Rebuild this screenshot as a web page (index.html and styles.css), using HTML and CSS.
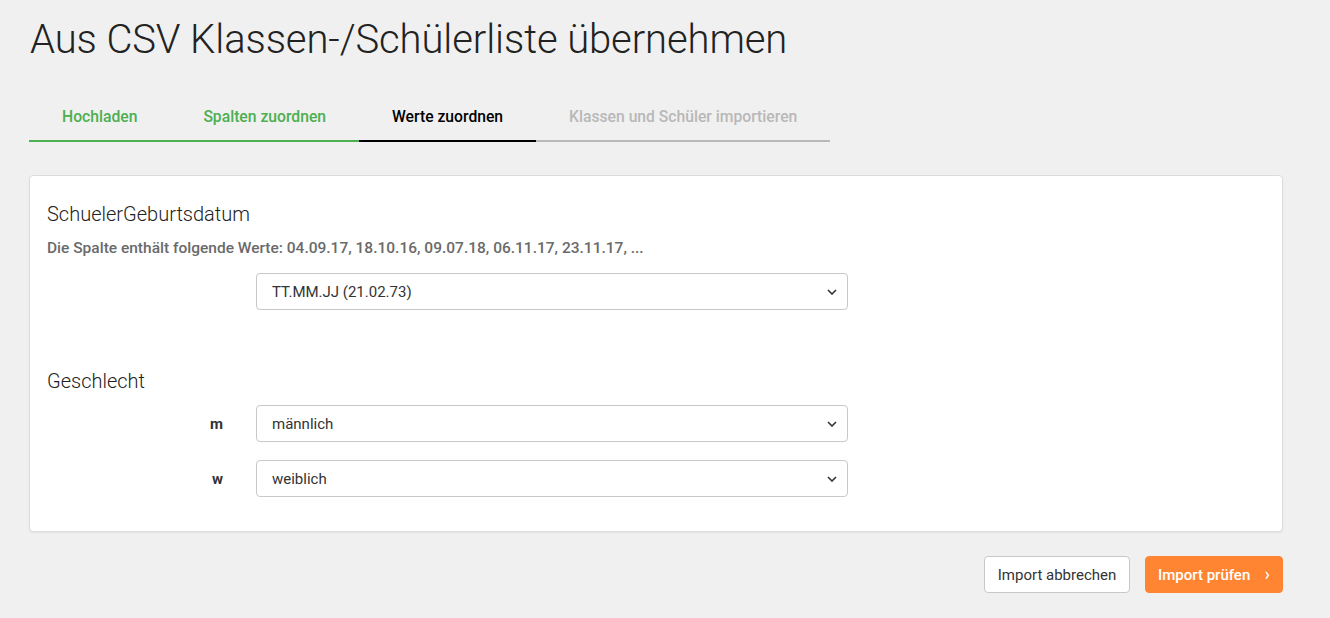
FILE: index.html
```html
<!DOCTYPE html>
<html lang="de">
<head>
<meta charset="utf-8">
<title>Import</title>
<link rel="stylesheet" href="styles.css">
</head>
<body>
<div class="page">
  <h1 class="title">Aus CSV Klassen-/Schülerliste übernehmen</h1>
  <nav class="steps">
    <div class="step done">Hochladen</div>
    <div class="step done">Spalten zuordnen</div>
    <div class="step active">Werte zuordnen</div>
    <div class="step todo">Klassen und Schüler importieren</div>
  </nav>
  <section class="card">
    <div class="group">
      <h2 class="group-title">SchuelerGeburtsdatum</h2>
      <p class="hint">Die Spalte enthält folgende Werte: 04.09.17, 18.10.16, 09.07.18, 06.11.17, 23.11.17, ...</p>
      <div class="row">
        <label class="row-label"></label>
        <div class="select"><span>TT.MM.JJ (21.02.73)</span><svg class="chev" viewBox="0 0 10 6" width="10" height="6"><path d="M1 1l4 4 4-4" fill="none" stroke="#333" stroke-width="1.6"/></svg></div>
      </div>
    </div>
    <div class="group second">
      <h2 class="group-title">Geschlecht</h2>
      <div class="row tight">
        <label class="row-label">m</label>
        <div class="select"><span>männlich</span><svg class="chev" viewBox="0 0 10 6" width="10" height="6"><path d="M1 1l4 4 4-4" fill="none" stroke="#333" stroke-width="1.6"/></svg></div>
      </div>
      <div class="row">
        <label class="row-label">w</label>
        <div class="select"><span>weiblich</span><svg class="chev" viewBox="0 0 10 6" width="10" height="6"><path d="M1 1l4 4 4-4" fill="none" stroke="#333" stroke-width="1.6"/></svg></div>
      </div>
    </div>
  </section>
  <div class="actions">
    <button class="btn btn-default">Import abbrechen</button>
    <button class="btn btn-primary">Import prüfen <span class="arrow">›</span></button>
  </div>
</div>
</body>
</html>
```
FILE: styles.css
```css
* { box-sizing: border-box; }
html, body { margin: 0; padding: 0; }
body {
  background: #f0f0f0;
  font-family: Roboto, "Liberation Sans", Arial, sans-serif;
  color: #333;
}
.page {
  padding: 0 47px 0 29px;
}
.title {
  margin: 0;
  padding-top: 17px;
  font-size: 40px;
  font-weight: 300;
  line-height: 46px;
  color: #222;
  padding-left: 1px;
  letter-spacing: -0.1px;
}
.steps {
  display: flex;
  width: 800px;
  margin-top: 41px;
}
.step {
  padding: 0 33px;
  height: 38px;
  line-height: 26px;
  font-size: 15.7px;
  font-weight: 500;
  border-bottom: 2px solid #b3b3b3;
  white-space: nowrap;
}
.step.done { color: #4caf50; border-bottom-color: #4caf50; }
.step.active { color: #000; border-bottom-color: #000; }
.step.todo { color: #b8b8b8; border-bottom-color: #b8b8b8; flex: 1; }
.card {
  margin-top: 33px;
  background: #fff;
  border: 1px solid #dcdcdc;
  border-radius: 4px;
  box-shadow: 0 1px 2px rgba(0,0,0,0.06);
  padding: 24px 17px 34px;
  width: 1254px;
}
.group-title {
  margin: 0;
  font-size: 20px;
  font-weight: 300;
  line-height: 28px;
  color: #222;
}
.hint {
  margin: 10px 0 15px;
  font-size: 15.5px;
  font-weight: 500;
  color: #6a6a6a;
  line-height: 20px;
}
.group.second { margin-top: 57px; }
.group.second .group-title { margin-bottom: 10px; }
.row {
  display: flex;
  align-items: center;
  gap: 33px;
}
.row.tight { margin-bottom: 18px; }
.row-label {
  width: 176px;
  text-align: right;
  font-size: 15px;
  font-weight: 700;
  color: #333;
}
.select {
  width: 592px;
  height: 37px;
  border: 1px solid #c8c8c8;
  border-radius: 4px;
  display: flex;
  align-items: center;
  justify-content: space-between;
  padding: 0 10px 0 15px;
  font-size: 15px;
  color: #333;
  background: #fff;
}
.chev { margin-top: 1px; }
.actions {
  display: flex;
  justify-content: flex-end;
  gap: 15px;
  margin-top: 24px;
  width: 1254px;
}
.btn {
  height: 37px;
  font-family: Roboto, "Liberation Sans", Arial, sans-serif;
  font-size: 15px;
  border-radius: 4px;
  padding: 0 12px;
  cursor: pointer;
}
.btn-default {
  background: #fff;
  border: 1px solid #c8c8c8;
  color: #333;
  width: 146px;
}
.btn-primary {
  background: #ff8533;
  border: 1px solid #ff8533;
  color: #fff;
  font-weight: 500;
  width: 138px;
  display: flex;
  align-items: center;
  justify-content: space-between;
}
.arrow { font-size: 18px; font-weight: 400; margin-top: -2px; }
```
